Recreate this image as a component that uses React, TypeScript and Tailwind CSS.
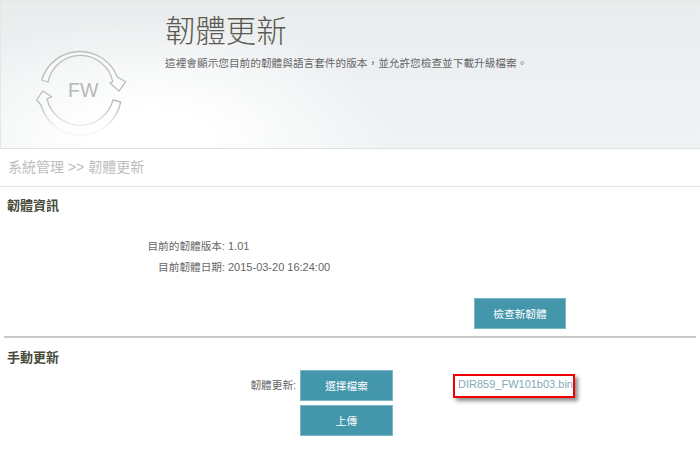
import React from "react";

const FONT = "font-['Liberation_Sans','Noto_Sans_CJK_TC',sans-serif]";
const BTN =
  "flex h-[31px] items-center justify-center border border-[#7db8c6] bg-[#4496ab] text-[10.67px] text-white";

function FwIcon() {
  return (
    <svg width="100" height="100" viewBox="30 40 100 100" className="shrink-0">
      <defs>
        <linearGradient id="fade" gradientUnits="userSpaceOnUse" x1="0" y1="105" x2="0" y2="130">
          <stop offset="0" stopColor="#bcbebe" />
          <stop offset="1" stopColor="#f4f5f5" />
        </linearGradient>
      </defs>
      <path
        d="M41.7 80 A40 40 0 0 1 117.3 77 L125.7 81.7 L119 91 L110 83 L112.7 81.7 A33 33 0 0 0 48 82 Z"
        fill="#ffffff"
        fillOpacity="0.35"
        stroke="#bcbebe"
        strokeWidth="1.3"
        strokeLinejoin="round"
      />
      <path
        d="M42.7 91 L51.7 96.7 L47 99 A34 34 0 0 0 113 100 L120.7 102 A41 41 0 0 1 41 105 L36.7 100 Z"
        fill="#ffffff"
        fillOpacity="0.35"
        stroke="url(#fade)"
        strokeWidth="1.3"
        strokeLinejoin="round"
      />
      <text x="68" y="97" fontSize="19.5" fill="#b5b7b7" fontFamily="Liberation Sans, sans-serif">
        FW
      </text>
    </svg>
  );
}

function InfoRow({ label, value }: { label: string; value: string }) {
  return (
    <div className="flex h-[20.5px] items-center text-[11px] text-[#666]">
      <div className="w-[225px] text-right text-[10.67px]">{label}:</div>
      <div className="pl-[3px]">{value}</div>
    </div>
  );
}

export default function App() {
  return (
    <div className={`${FONT} h-[461px] w-[700px] overflow-hidden bg-white`}>
      <header className="relative flex h-[149px] border-y border-l border-t-[#e6e8e8] border-b-[#dfe2e2] border-l-[#e6e8e8] bg-[linear-gradient(#e9ebec,#edf0f2_45%,#eff3f4)]">
        <div className="absolute inset-0 bg-[radial-gradient(ellipse_240px_125px_at_150px_140px,#ffffff_25%,#ffffff00_100%)]" />
        <div className="relative flex w-[164px] items-start pt-[39px] pl-[29px]">
          <FwIcon />
        </div>
        <div className="relative pt-[10px]">
          <h1 className="text-[30.4px] leading-[40px] font-light text-[#5a5a50]">韌體更新</h1>
          <p className="mt-[2px] text-[10.67px] leading-[20px] text-[#666]">
            這裡會顯示您目前的韌體與語言套件的版本，並允許您檢查並下載升級檔案。
          </p>
        </div>
      </header>

      <div className="flex h-[38px] items-center border-b border-[#e4e6e6] pl-[8px] text-[14px] text-[#bdbdbd]">
        系統管理 &gt;&gt; 韌體更新
      </div>

      <section className="px-[4px]">
        <h2 className="pt-[9px] pl-[3px] text-[13px] leading-[20px] font-bold text-[#4a4a38]">韌體資訊</h2>
        <div className="-ml-[4px] pt-[20px]">
          <InfoRow label="目前的韌體版本" value="1.01" />
          <InfoRow label="目前韌體日期" value="2015-03-20 16:24:00" />
        </div>
        <div className="flex justify-end pt-[21px] pr-[130px]">
          <div className={`${BTN} w-[92px]`}>檢查新韌體</div>
        </div>
        <hr className="mt-[7px] h-[2px] w-[692px] border-0 bg-[#c9c9c9]" />
      </section>

      <section className="relative">
        <h2 className="pt-[10px] pl-[7px] text-[13px] leading-[20px] font-bold text-[#4a4a38]">手動更新</h2>
        <div className="flex pt-[2px]">
          <div className="w-[296px] pt-[7px] text-right text-[10.67px] leading-[16px] text-[#666]">韌體更新:</div>
          <div className="ml-[4px] flex w-[93px] flex-col gap-[4px]">
            <div className={BTN}>選擇檔案</div>
            <div className={BTN}>上傳</div>
          </div>
          <div className="ml-[65px] pt-[6px] text-[11px] leading-[16px] text-[#82aab8]">DIR859_FW101b03.bin</div>
        </div>
        <div className="absolute top-[36px] left-[453px] h-[24px] w-[122px] border-[2px] border-[#f00000] shadow-[3px_3px_4px_#8a8a8a]" />
      </section>
    </div>
  );
}
